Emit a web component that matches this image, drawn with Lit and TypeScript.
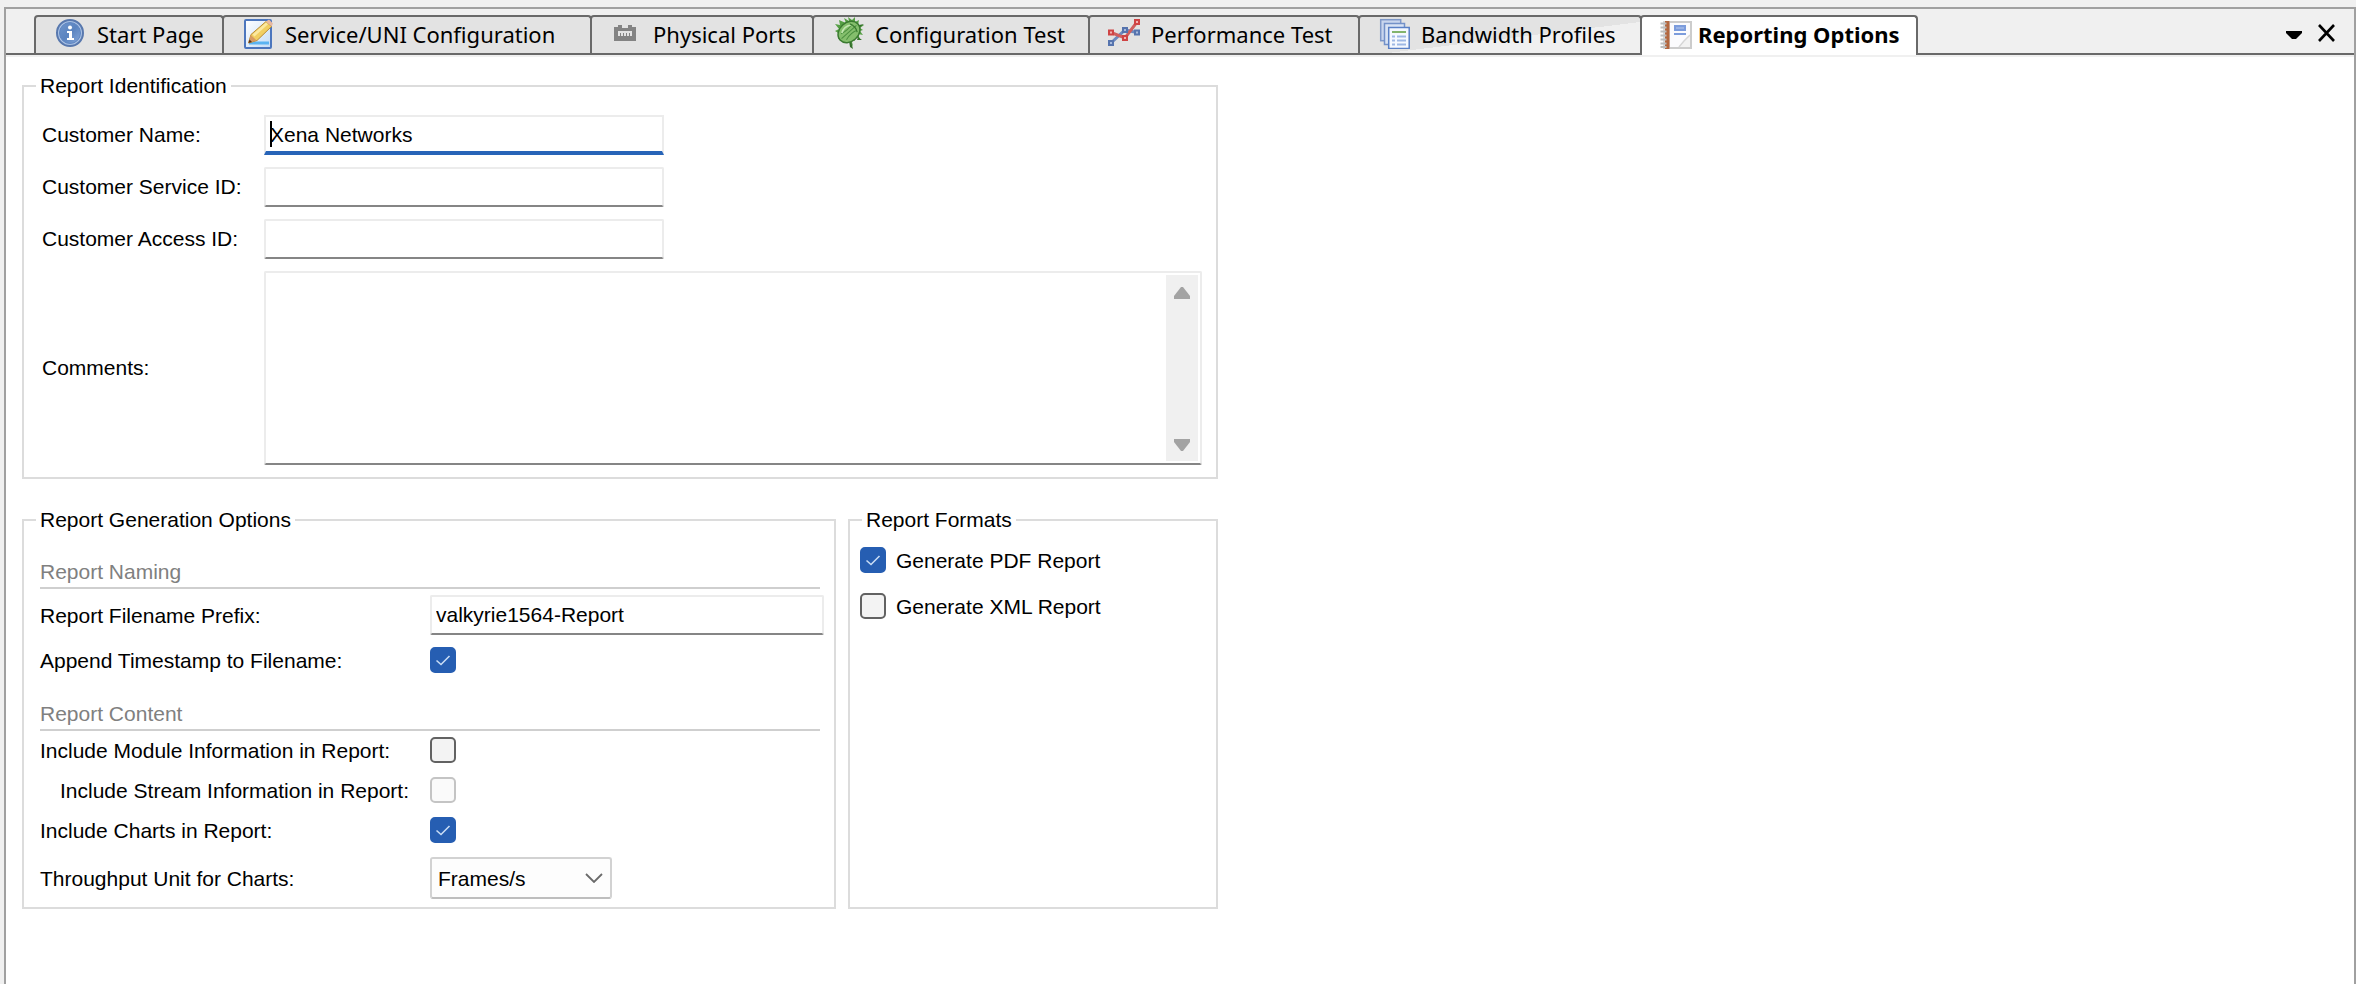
import { LitElement, html, css, svg, nothing, TemplateResult } from "lit";
import { customElement, property, state } from "lit/decorators.js";
import { classMap } from "lit/directives/class-map.js";
import { styleMap } from "lit/directives/style-map.js";

interface Tab {
  id: string;
  label: string;
  width: number;
}

const TABS: Tab[] = [
  { id: "start", label: "Start Page", width: 190 },
  { id: "service", label: "Service/UNI Configuration", width: 370 },
  { id: "ports", label: "Physical Ports", width: 224 },
  { id: "config", label: "Configuration Test", width: 278 },
  { id: "perf", label: "Performance Test", width: 272 },
  { id: "bandwidth", label: "Bandwidth Profiles", width: 284 },
  { id: "report", label: "Reporting Options", width: 278 },
];

const ICONS: Record<string, TemplateResult> = {
  start: svg`
    <defs><linearGradient id="disc" x1="0" y1="0" x2="1" y2="1">
      <stop offset="0" stop-color="#6f95cc"/><stop offset="0.5" stop-color="#5b84c0"/><stop offset="1" stop-color="#86a8da"/>
    </linearGradient></defs>
    <circle cx="16" cy="16" r="13" fill="#a9c1e4" stroke="#5878ae" stroke-width="2"/>
    <circle cx="16" cy="16" r="10.5" fill="url(#disc)" stroke="#5f86c2" stroke-width="1"/>
    <circle cx="16" cy="10.5" r="2" fill="#fff"/>
    <path d="M13 14h5v7h2v2h-7v-2h2v-5h-2z" fill="#fff"/>`,
  service: svg`
    <defs><linearGradient id="sheet" x1="0" y1="0" x2="1" y2="1">
      <stop offset="0" stop-color="#fff"/><stop offset="1" stop-color="#c4dcf6"/>
    </linearGradient></defs>
    <rect x="3" y="3" width="26" height="28" rx="1" fill="url(#sheet)" stroke="#4c76bd" stroke-width="2"/>
    <path d="M7 26h20" stroke="#5bb4f2" stroke-width="3"/>
    <path d="M6.5 26l2.5-8.5L24 4.5l5.500 5-14.500 14z" fill="#f1cf62" stroke="#b98b34" stroke-width="1"/>
    <path d="M10.500 17.500L24 5.500l2 1.800L12.500 19.500z" fill="#fbe9a0"/>
    <path d="M24 4.500l3-2 4 4-1.500 3z" fill="#e8b8a0"/>
    <path d="M6.500 26l2.200-8 6 5.500z" fill="#d79a62"/>
    <path d="M6.500 26l1-3.500 2.500 2.500z" fill="#59301a"/>`,
  ports: svg`
    <path d="M4 10h4V8h4v3h6V8h4v2h4v14H4z" fill="#838383"/>
    <path d="M8 14h14v5h-2v-3h-1v3h-2v-3h-1v3h-2v-3h-1v3h-2v-3h-1v3H8z" fill="#e3e3e3"/>`,
  config: svg`
    <path d="M14 6L12 1l5 3-1-4 4 3 3-3v5l4-2-1 5 6 0-4 3 3 2-3 1 3 4-5-1 2 5-5-2 0 4-4-3 2 8-6-6-3 2-1-4-5 1 2-5-5-3 4-2-4-5 5 1-1-5z" fill="#56a045"/>
    <path d="M19 24l2 8-3-2-1-6zM26 20l4 3-5 0zM27 8l5-1-4 3z" fill="#35702c"/>
    <g transform="rotate(-42 17 15)">
      <ellipse cx="17" cy="15" rx="12" ry="9.500" fill="#84be6c" stroke="#3a7a30" stroke-width="1.500"/>
      <path d="M7 15h20M10 11c5 1.500 10 1.500 14 0M10 19c5-1.500 10-1.500 14 0" stroke="#4c9040" stroke-width="1" fill="none"/>
      <path d="M11 11c4-2.500 8-2.500 12 0" stroke="#c2e6b0" stroke-width="1.500" fill="none"/>
      <path d="M23 9.500c2 3 2 8 0 11" stroke="#3a7a30" stroke-width="1.200" fill="none"/>
    </g>`,
  perf: svg`
    <path d="M3 26L17 13l12 2.500" stroke="#6d8abf" stroke-width="3" fill="none"/>
    <path d="M3 15.500L17 21 29 5" stroke="#cf5f5f" stroke-width="3" fill="none"/>
    <g fill="#a9bbdc" stroke="#5674ae" stroke-width="2">
      <rect x="1" y="24" width="4" height="4"/><rect x="15" y="11" width="4" height="4"/><rect x="27" y="13.500" width="4" height="4"/>
    </g>
    <g fill="#f2b4b4" stroke="#cf4444" stroke-width="2">
      <rect x="1" y="13.500" width="4" height="4"/><rect x="15" y="19" width="4" height="4"/><rect x="27" y="3" width="4" height="4"/>
    </g>`,
  bandwidth: svg`
    <g stroke-width="1.500">
      <rect x="2.700" y="2.700" width="20" height="21" fill="#c9d6ee" stroke="#7e98c8"/>
      <rect x="6.500" y="6.500" width="20" height="21" fill="#d9e3f4" stroke="#7391c8"/>
      <rect x="10.700" y="10.500" width="20.500" height="21" fill="#f4f8ff" stroke="#5a80c6"/>
    </g>
    <path d="M14 15h14" stroke="#82b46c" stroke-width="2"/>
    <path d="M14 19.500h3M19 19.500h9M14 23.500h3M19 23.500h9M14 27.500h3M19 27.500h9" stroke="#9db7e4" stroke-width="2"/>`,
  report: svg`
    <rect x="9" y="5" width="22" height="26" fill="#fbfbfd" stroke="#cccccc" stroke-width="2"/>
    <rect x="3" y="4" width="7" height="28" fill="#d8d8d8"/>
    <rect x="5" y="4" width="4.500" height="28" fill="#b3663e"/>
    <path d="M0.500 6.500h6M0.500 10.500h6M0.500 14.500h6M0.500 18.500h6M0.500 22.500h6M0.500 26.500h6M0.500 30h6" stroke="#bdbdbd" stroke-width="2"/>
    <rect x="14" y="8" width="12" height="6" fill="#7c9cdc"/>
    <path d="M16 11h8" stroke="#b9cbee" stroke-width="1"/>
    <path d="M14 17h12" stroke="#7c9cdc" stroke-width="2"/>
    <path d="M30 18L20 30h10z" fill="#f2f2f2"/>
    <path d="M30 18l-6 6-5 6" stroke="#d6d6d6" stroke-width="1.500" fill="none"/>`,
};

/** One tab of the document strip. */
@customElement("doc-tab")
class DocTab extends LitElement {
  @property({ attribute: false }) tab!: Tab;
  @property({ type: Boolean, reflect: true }) active = false;

  static styles = css`
    :host { display: block; flex: 0 1 auto; margin-right: -2px; min-width: 60px; }
    :host([active]) { margin-bottom: -2px; }
    .tab {
      display: flex;
      align-items: flex-start;
      gap: 11px;
      box-sizing: border-box;
      width: 100%;
      height: 100%;
      margin: 0;
      padding: 0 0 0 18px;
      border: 2px solid #696969;
      border-bottom: 0;
      border-radius: 4px 4px 0 0;
      background: #e3e3e3;
      color: #000;
      font: 22px/34px "Noto Sans", sans-serif;
      text-align: left;
      white-space: nowrap;
      overflow: hidden;
    }
    .hot { background: linear-gradient(173deg, #e3e3e3 56%, #f0f0f0 56%); }
    .active { gap: 6px; background: #fff; font-weight: 700; }
    .icon { flex: none; width: 32px; height: 32px; }
  `;

  render() {
    return html`
      <button
        class=${classMap({ tab: true, active: this.active, hot: this.tab.id === "bandwidth" })}
        role="tab"
        aria-selected=${this.active ? "true" : "false"}
      >
        <svg class="icon" viewBox="0 0 32 32" aria-hidden="true">${ICONS[this.tab.id]}</svg>
        <span>${this.tab.label}</span>
      </button>
    `;
  }
}

@customElement("app-root")
class AppRoot extends LitElement {
  @state() private active = "report";

  static styles = css`
    :host {
      display: block;
      box-sizing: border-box;
      min-height: 100vh;
      padding: 7px 0 0 4px;
      background: #f0f0f0;
      color: #000;
      font: 21px/30px "Liberation Sans", Arial, sans-serif;
    }
    .frame {
      display: flex;
      flex-direction: column;
      box-sizing: border-box;
      min-height: calc(100vh - 7px);
      border: 2px solid #a0a0a0;
      border-bottom: 0;
    }
    .strip {
      display: flex;
      padding: 6px 16px 0 28px;
      border-bottom: 2px solid #696969;
    }
    .tabs { display: flex; flex: 1; min-width: 0; height: 38px; }
    .tools { display: flex; align-items: center; height: 36px; gap: 12px; }
    .tool { display: block; margin: 0; padding: 0; border: 0; background: none; height: 20px; }
    .tool svg { display: block; width: 20px; height: 20px; }
    .page {
      flex: 1;
      padding: 14px 16px;
      border-top: 2px solid #f0f0f0;
      background: #fff;
    }
    .groups {
      display: grid;
      grid-template-columns: minmax(0, 1fr) 370px;
      gap: 26px 12px;
      max-width: 1196px;
    }
    .group {
      min-width: 0;
      margin: 0;
      padding: 0 10px;
      border: 2px solid #dcdcdc;
    }
    .group legend { margin-left: 2px; padding: 0 4px; }
    .identification { grid-column: 1 / -1; padding: 14px 14px 12px 18px; }
    .identification legend { margin-left: -6px; }
    .fields {
      display: grid;
      grid-template-columns: 222px minmax(0, 1fr);
      align-items: center;
      row-gap: 12px;
    }
    .text {
      box-sizing: border-box;
      width: 100%;
      height: 40px;
      margin: 0;
      padding: 0 4px;
      border: 2px solid #ececec;
      border-bottom-color: #858585;
      border-radius: 2px;
      background: #fff;
      color: #000;
      font: inherit;
      outline: none;
    }
    .short { max-width: 400px; }
    .current {
      padding-top: 2px;
      border-bottom: 4px solid #2764b8;
      border-radius: 0;
      background: linear-gradient(#000, #000) 4px 4px / 2px 26px no-repeat #fff;
    }
    .memo {
      display: flex;
      box-sizing: border-box;
      height: 194px;
      padding: 2px;
      border: 2px solid #ececec;
      border-bottom-color: #858585;
      border-radius: 2px;
    }
    .memo textarea {
      flex: 1;
      min-width: 0;
      padding: 2px;
      border: 0;
      outline: none;
      resize: none;
      font: inherit;
    }
    .scroll {
      display: flex;
      flex-direction: column;
      justify-content: space-between;
      width: 32px;
      background: #f0f0f0;
    }
    .step { margin: 0; padding: 10px 8px; border: 0; background: none; }
    .step svg { display: block; width: 16px; height: 16px; }

    .options { padding: 22px 10px 8px 16px; }
    .options legend { margin-left: -4px; }
    .heading {
      margin: 0 4px 6px 0;
      border-bottom: 2px solid #cfcfcf;
      color: #808080;
      font: inherit;
    }
    .rows { display: grid; gap: 14px; }
    .naming { gap: 12px; margin-bottom: 26px; }
    .row {
      display: grid;
      grid-template-columns: 390px minmax(0, 1fr);
      align-items: center;
    }
    .row label { padding-top: 2px; line-height: 24px; }
    .sub { padding-left: 20px; }
    .check {
      appearance: none;
      display: block;
      flex: none;
      box-sizing: border-box;
      width: 26px;
      height: 26px;
      margin: 0;
      border: 2px solid #626262;
      border-radius: 5px;
      background: #f3f3f3;
    }
    .check:disabled { border-color: #c4c4c4; background: #fafafa; }
    .check:checked {
      border-color: #265eb2;
      background: #265eb2 url("data:image/svg+xml,%3Csvg xmlns='http://www.w3.org/2000/svg' viewBox='0 0 22 22'%3E%3Cpath d='M4.500 11.500l4.500 4 8.500-8.500' fill='none' stroke='%23c8dcf4' stroke-width='1.600'/%3E%3C/svg%3E") center / 22px 22px no-repeat;
    }
    .select {
      appearance: none;
      box-sizing: border-box;
      width: 182px;
      height: 42px;
      margin: 0;
      padding: 2px 30px 0 6px;
      border: 2px solid #d2d2d2;
      border-bottom-color: #bebebe;
      border-radius: 3px;
      color: #000;
      font: inherit;
      background: #fdfdfd url("data:image/svg+xml,%3Csvg xmlns='http://www.w3.org/2000/svg' viewBox='0 0 18 10'%3E%3Cpath d='M1 1l8 8 8-8' fill='none' stroke='%236a6a6a' stroke-width='1.800'/%3E%3C/svg%3E") right 7px center / 18px 10px no-repeat;
    }
    .formats { padding-top: 12px; }
    .format { display: flex; align-items: center; gap: 10px; margin-bottom: 20px; line-height: 26px; }
    .format span { padding-top: 2px; line-height: 24px; }
  `;

  private checkRow(id: string, label: string, checked: boolean, disabled = false) {
    return html`
      <div class="row">
        <label for=${id} class=${disabled ? "sub" : nothing}>${label}</label>
        <input class="check" type="checkbox" id=${id} ?checked=${checked} ?disabled=${disabled} />
      </div>
    `;
  }

  render() {
    return html`
      <div class="frame">
        <div class="strip">
          <div class="tabs" role="tablist">
            ${TABS.map(
              (t) => html`<doc-tab
                style=${styleMap({ width: `${t.width}px` })}
                .tab=${t}
                ?active=${t.id === this.active}
                @click=${() => (this.active = t.id)}
              ></doc-tab>`
            )}
          </div>
          <div class="tools">
            <button class="tool" aria-label="Tab list">
              <svg viewBox="0 0 20 20"><path d="M0 8h16v2l-6 6H6L0 10z" /></svg>
            </button>
            <button class="tool" aria-label="Close tab">
              <svg viewBox="0 0 20 20"><path d="M1 2l15 16M16 2L1 18" stroke="#000" stroke-width="2.600" /></svg>
            </button>
          </div>
        </div>

        <main class="page">
          <form class="groups" @submit=${(e: Event) => e.preventDefault()}>
            <fieldset class="group identification">
              <legend>Report Identification</legend>
              <div class="fields">
                <label for="name">Customer Name:</label>
                <input class="text short current" id="name" type="text" value="Xena Networks" />
                <label for="service">Customer Service ID:</label>
                <input class="text short" id="service" type="text" />
                <label for="access">Customer Access ID:</label>
                <input class="text short" id="access" type="text" />
                <label for="comments">Comments:</label>
                <div class="memo">
                  <textarea id="comments"></textarea>
                  <div class="scroll">
                    <button class="step" type="button" aria-label="Scroll up">
                      <svg viewBox="0 0 16 16"><path d="M7 2h2l7 9v3H0v-3z" fill="#a3a3a3" /></svg>
                    </button>
                    <button class="step" type="button" aria-label="Scroll down">
                      <svg viewBox="0 0 16 16"><path d="M0 4h16v3l-7 9H7L0 7z" fill="#a3a3a3" /></svg>
                    </button>
                  </div>
                </div>
              </div>
            </fieldset>

            <fieldset class="group options">
              <legend>Report Generation Options</legend>
              <h3 class="heading">Report Naming</h3>
              <div class="rows naming">
                <div class="row">
                  <label for="prefix">Report Filename Prefix:</label>
                  <input class="text" id="prefix" type="text" value="valkyrie1564-Report" />
                </div>
                ${this.checkRow("stamp", "Append Timestamp to Filename:", true)}
              </div>
              <h3 class="heading">Report Content</h3>
              <div class="rows">
                ${this.checkRow("module", "Include Module Information in Report:", false)}
                ${this.checkRow("stream", "Include Stream Information in Report:", false, true)}
                ${this.checkRow("charts", "Include Charts in Report:", true)}
                <div class="row">
                  <label for="unit">Throughput Unit for Charts:</label>
                  <select class="select" id="unit">
                    <option>Frames/s</option>
                  </select>
                </div>
              </div>
            </fieldset>

            <fieldset class="group formats">
              <legend>Report Formats</legend>
              <label class="format"><input class="check" type="checkbox" checked /><span>Generate PDF Report</span></label>
              <label class="format"><input class="check" type="checkbox" /><span>Generate XML Report</span></label>
            </fieldset>
          </form>
        </main>
      </div>
    `;
  }
}
